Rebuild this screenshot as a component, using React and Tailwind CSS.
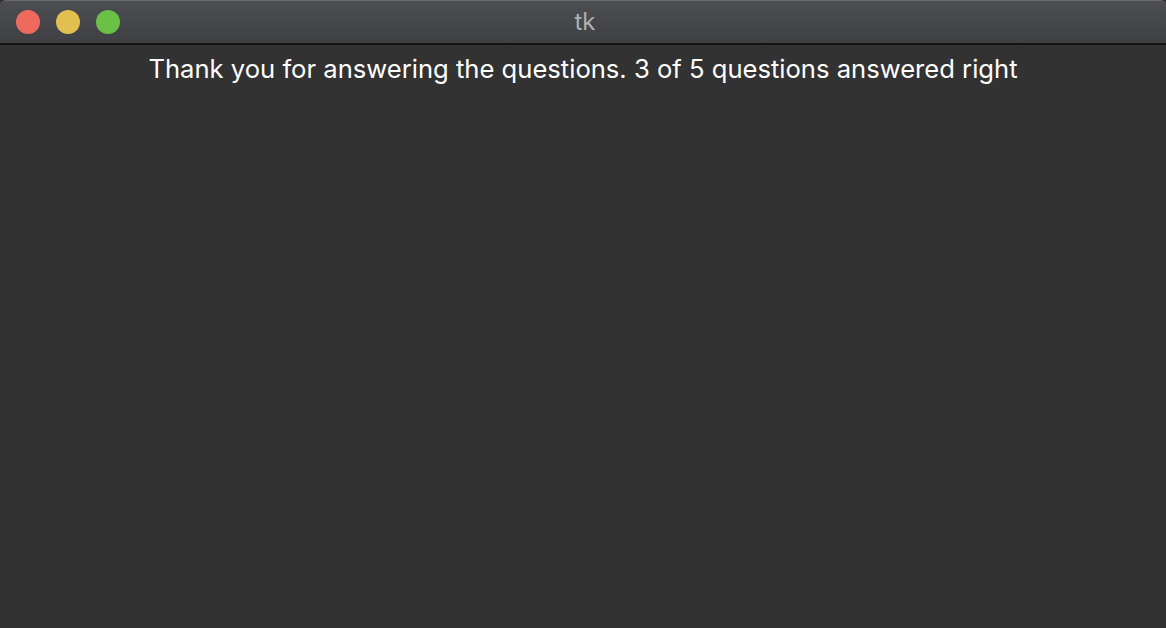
export default function App() {
  return (
    <div className="w-[1166px] h-[628px] flex flex-col bg-[#323232] overflow-hidden" style={{ fontFamily: "Inter, 'Noto Sans', sans-serif" }}>
      <div className="h-[43px] shrink-0 flex items-center relative rounded-t-[6px] bg-gradient-to-b from-[#4c4e51] to-[#3e4043] border-t border-[#6a6c6e]">
        <div className="flex items-center gap-[16px] pl-[16px]">
          <span className="w-[24px] h-[24px] rounded-full bg-[#ee6a5f]" />
          <span className="w-[24px] h-[24px] rounded-full bg-[#e2c04f]" />
          <span className="w-[24px] h-[24px] rounded-full bg-[#6bc046]" />
        </div>
        <div className="absolute inset-0 flex items-center justify-center pl-[4px] text-[24px] text-[#adafb1]">tk</div>
      </div>
      <div className="h-[2px] shrink-0 bg-[#141414]" />
      <div className="flex justify-center pt-[8px]">
        <p className="text-[25.6px] leading-[32px] text-white">
          Thank you for answering the questions. 3 of 5 questions answered right
        </p>
      </div>
    </div>
  );
}
